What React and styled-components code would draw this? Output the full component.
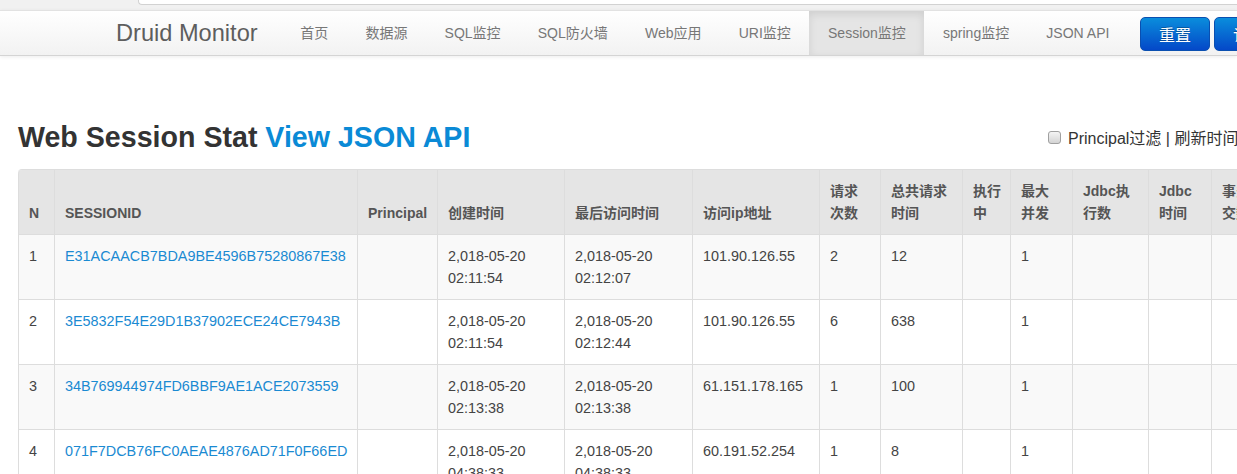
import React from 'react';
import styled, { createGlobalStyle } from 'styled-components';

const GlobalStyle = createGlobalStyle`
    html, body {
        margin: 0;
        padding: 0;
        overflow: hidden;
        background: #fff;
    }
    body {
        font-family: "Liberation Sans", Arial, "Noto Sans CJK SC", sans-serif;
        font-size: 14px;
        color: #333;
    }
`

const Page = styled.div`
    width: 100vw;
    overflow: hidden;
`
const TopStrip = styled.div`
    height: 10px;
    background: #f1f1f1;
`
const TabEdge = styled.div`
    margin-left: 138px;
    height: 4px;
    background: #fff;
    border: 1px solid #d2d2d2;
    border-top: none;
    border-right: none;
    border-bottom-left-radius: 4px;
`
const Navbar = styled.div`
    height: 44px;
    display: flex;
    align-items: stretch;
    padding-left: 116px;
    background: linear-gradient(to bottom, #ffffff, #f2f2f2);
    border-top: 1px solid #e2e2e2;
    border-bottom: 1px solid #d4d4d4;
    box-shadow: 0 1px 4px rgba(0, 0, 0, 0.08);
    white-space: nowrap;
`
const Brand = styled.a`
    font-size: 23.6px;
    line-height: 44px;
    color: #5e5e5e;
    margin-right: 24px;
    text-decoration: none;
`
const NavList = styled.ul`
    display: flex;
    margin: 0;
    padding: 0;
    list-style: none;
`
const NavItem = styled.li`
    padding: 0 18.6px;
    line-height: 44px;
    font-size: 14px;
    color: #777;
    background: ${props => props.$active ? '#e5e5e5' : 'transparent'};
    box-shadow: ${props => props.$active ? 'inset 0 3px 8px rgba(0, 0, 0, 0.1)' : 'none'};
`
const ButtonGroup = styled.div`
    display: flex;
    gap: 4px;
    margin-left: 12px;
    padding-top: 6px;
`
const PrimaryButton = styled.button`
    height: 34px;
    padding: 0 18px;
    font-family: inherit;
    font-size: 16px;
    color: #fff;
    border: 1px solid #0a4fb0;
    border-radius: 5px;
    background: linear-gradient(to bottom, #0a8ddc, #0448c8);
    text-shadow: 0 -1px 0 rgba(0, 0, 0, 0.25);
    white-space: nowrap;
`
const Content = styled.div`
    padding-left: 18px;
`
const TitleRow = styled.div`
    display: flex;
    align-items: center;
    margin-top: 61px;
    height: 40px;
    white-space: nowrap;
`
const Title = styled.h2`
    flex: 0 0 1030px;
    margin: 0;
    font-size: 28.6px;
    line-height: 40px;
    font-weight: bold;
    color: #333;
    & a {
        color: #0a8ad6;
        text-decoration: none;
    }
`
const Filter = styled.label`
    display: flex;
    align-items: center;
    font-size: 16px;
    color: #333;
`
const Check = styled.input`
    appearance: none;
    width: 13px;
    height: 13px;
    margin: 0 7px 0 0;
    border: 1px solid #a0a0a0;
    border-radius: 3px;
    background: linear-gradient(to bottom, #f4f4f4, #d4d4d4);
`
const Table = styled.table`
    margin-top: 12px;
    table-layout: fixed;
    border-collapse: separate;
    border-spacing: 0;
    border: 1px solid #ddd;
    border-left: 0;
    border-top-left-radius: 4px;
    & th, & td {
        box-sizing: border-box;
        padding: 10px;
        line-height: 22px;
        text-align: left;
        border-left: 1px solid #ddd;
        border-top: 1px solid #ddd;
        vertical-align: top;
    }
    & td {
        font-size: 14.4px;
    }
    & th {
        border-top: 0;
        background: #e5e5e5;
        color: #555;
        font-weight: bold;
        vertical-align: bottom;
        white-space: pre;
    }
    & th:first-child {
        border-top-left-radius: 4px;
    }
`
const Row = styled.tr`
    background: ${props => props.$odd ? '#f9f9f9' : '#fff'};
    color: #444;
    & a {
        color: #1a8ad2;
        text-decoration: none;
    }
`

const columns = [
    ['N', 36], ['SESSIONID', 303], ['Principal', 80], ['创建时间', 127],
    ['最后访问时间', 128], ['访问ip地址', 127], ['请求\n次数', 61], ['总共请求\n时间', 82],
    ['执行\n中', 48], ['最大\n并发', 62], ['Jdbc执\n行数', 76], ['Jdbc\n时间', 63],
    ['事务提\n交数', 66], ['事务回\n滚数', 66], ['读取行\n数', 66], ['更新行\n数', 66],
]

const sessions = [
    ['E31ACAACB7BDA9BE4596B75280867E38', '2,018-05-20 02:11:54', '2,018-05-20 02:12:07', '101.90.126.55', '2', '12'],
    ['3E5832F54E29D1B37902ECE24CE7943B', '2,018-05-20 02:11:54', '2,018-05-20 02:12:44', '101.90.126.55', '6', '638'],
    ['34B769944974FD6BBF9AE1ACE2073559', '2,018-05-20 02:13:38', '2,018-05-20 02:13:38', '61.151.178.165', '1', '100'],
    ['071F7DCB76FC0AEAE4876AD71F0F66ED', '2,018-05-20 04:38:33', '2,018-05-20 04:38:33', '60.191.52.254', '1', '8'],
]

const navItems = ['首页', '数据源', 'SQL监控', 'SQL防火墙', 'Web应用', 'URI监控', 'Session监控', 'spring监控', 'JSON API']

const tableWidth = columns.reduce((sum, c) => sum + c[1], 0)

function App() {
    return (
        <Page>
            <GlobalStyle />
            <TopStrip>
                <TabEdge />
            </TopStrip>
            <Navbar>
                <Brand href="#">Druid Monitor</Brand>
                <NavList>
                    {navItems.map(item => (
                        <NavItem key={item} $active={item === 'Session监控'}>{item}</NavItem>
                    ))}
                </NavList>
                <ButtonGroup>
                    <PrimaryButton>重置</PrimaryButton>
                    <PrimaryButton>记录日志并重置</PrimaryButton>
                </ButtonGroup>
            </Navbar>
            <Content>
                <TitleRow>
                    <Title>Web Session Stat <a href="#">View JSON API</a></Title>
                    <Filter>
                        <Check type="checkbox" />
                        Principal过滤 | 刷新时间 5秒
                    </Filter>
                </TitleRow>
                <Table style={{ width: tableWidth }}>
                    <thead>
                        <tr>
                            {columns.map(([name, width]) => (
                                <th key={name} style={{ width }}>{name}</th>
                            ))}
                        </tr>
                    </thead>
                    <tbody>
                        {sessions.map((s, i) => (
                            <Row key={s[0]} $odd={i % 2 === 0}>
                                <td>{i + 1}</td>
                                <td><a href="#">{s[0]}</a></td>
                                <td></td>
                                <td>{s[1]}</td>
                                <td>{s[2]}</td>
                                <td>{s[3]}</td>
                                <td>{s[4]}</td>
                                <td>{s[5]}</td>
                                <td></td>
                                <td>1</td>
                                <td></td>
                                <td></td>
                                <td></td>
                                <td></td>
                                <td></td>
                                <td></td>
                            </Row>
                        ))}
                    </tbody>
                </Table>
            </Content>
        </Page>
    )
}

export default App;
